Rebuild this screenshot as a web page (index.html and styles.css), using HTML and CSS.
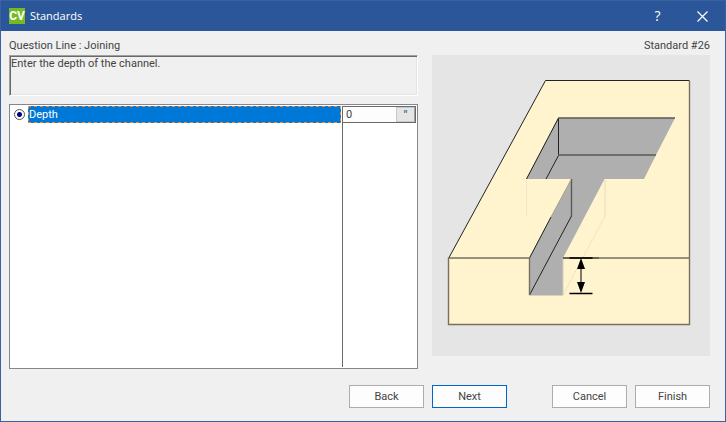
FILE: index.html
```html
<!DOCTYPE html>
<html lang="en">
<head>
<meta charset="utf-8">
<title>Standards</title>
<link rel="stylesheet" href="styles.css">
</head>
<body>
<div class="window">
  <header class="titlebar">
    <span class="logo" aria-hidden="true">CV</span>
    <h1 class="title">Standards</h1>
    <button class="caption-button" type="button">?</button>
    <button class="caption-button" type="button" aria-label="Close">
      <svg width="11" height="11" viewBox="0 0 11 11"><path d="M.5 .5 10.5 10.5M10.5 .5 .5 10.5" fill="none" stroke="#fff" stroke-width="1.2"/></svg>
    </button>
  </header>
  <main class="content">
    <section class="column">
      <h2 class="caption">Question Line : Joining</h2>
      <p class="prompt">Enter the depth of the channel.</p>
      <div class="list">
        <div class="names">
          <label class="option"><input class="radio" type="radio" name="question" checked><span class="option-name">Depth</span></label>
        </div>
        <div class="values">
          <div class="value">
            <input class="value-input" type="text" value="0" aria-label="Depth value">
            <button class="unit" type="button">"</button>
          </div>
        </div>
      </div>
    </section>
    <section class="column">
      <h2 class="caption caption-end">Standard #26</h2>
      <figure class="picture">
        <svg class="drawing" viewBox="432 55 278 301" role="img" aria-label="Channel depth">
          <path d="M448.500 258.500 545.500 80.500H689.500V324.500H448.500Z" fill="#fff4ce"/>
          <path d="M558 118H675L656 155 644 179H604.500L563 258V295.500H529V258L571 179H526Z" fill="#afafaf"/>
          <g fill="none" stroke="#222" stroke-width="1">
            <path d="M448.500 258.500 545.500 80.500H689.500"/>
            <path d="M526.500 179 558.500 118"/>
            <path d="M558.500 118V155.500L546 179M571.500 216 529.500 295M529.500 258 551 217"/>
          </g>
          <g fill="none" stroke="#77705f" stroke-width="1.400">
            <path d="M689.500 81V324.500H448.500V258H529.500V295M563 258H689.500"/>
            <path d="M558 118H675M558 155H656M571.500 216V179" stroke="#5a5955"/>
            <path d="M551 217 571 180" stroke="#aaa590" stroke-width="1"/>
          </g>
          <g fill="none" stroke="#f0e6c3">
            <path d="M526.500 180V216"/>
            <path d="M605 180V216" stroke="#e5dcba"/>
            <path d="M605 216 563 295" stroke-dasharray="1 1.500" stroke="#d8cfac"/>
            <path d="M563 259V295" stroke="#d2cdbd"/>
          </g>
          <g fill="none" stroke="#000">
            <path d="M563 258H599" stroke="#39362d"/>
            <path d="M569.500 258H592.500M569.500 293.500H592.500" stroke-width="1.600"/>
            <path d="M581 262V290"/>
          </g>
          <path d="M581 258 585 269H577ZM581 293 585 282H577Z"/>
        </svg>
      </figure>
    </section>
  </main>
  <footer class="actions">
    <div class="group">
      <button class="button" type="button">Back</button>
      <button class="button button-default" type="button">Next</button>
    </div>
    <div class="group">
      <button class="button" type="button">Cancel</button>
      <button class="button" type="button">Finish</button>
    </div>
  </footer>
</div>
</body>
</html>
```
FILE: styles.css
```css
* {
  box-sizing: border-box;
}

body {
  margin: 0;
  color: #444;
  font: 11px/16px Roboto, "Liberation Sans", sans-serif;
}

button,
input {
  margin: 0;
  padding: 0;
  border: 0;
  color: inherit;
  font: inherit;
}

h1,
h2,
p,
figure {
  margin: 0;
  font-size: inherit;
  font-weight: normal;
}

.window {
  display: flex;
  flex-direction: column;
  min-height: 100vh;
  border: 1px solid #3a62a1;
  background: #f0f0f0;
}

.titlebar {
  display: flex;
  align-items: center;
  height: 30px;
  padding-left: 8px;
  background: #2b579a;
  color: #fff;
}

.logo {
  width: 16px;
  height: 16px;
  background: #74bb20;
  font: bold 12px/16px Roboto, sans-serif;
  text-align: center;
}

.title {
  flex: 1;
  padding-left: 5px;
  font: 11px/16px "Open Sans", sans-serif;
}

.caption-button {
  display: flex;
  align-items: center;
  justify-content: center;
  width: 45px;
  height: 30px;
  background: transparent;
  font: 14px/16px "Open Sans", sans-serif;
}

.content {
  display: grid;
  flex: 1;
  grid-template-columns: minmax(0, 409fr) minmax(0, 278fr);
  gap: 14px;
  padding: 7px 15px 0 8px;
}

.column {
  display: flex;
  flex-direction: column;
}

.caption {
  padding-bottom: 1px;
}

.caption-end {
  text-align: right;
}

.prompt {
  min-height: 41px;
  padding: 0 1px;
  border: 1px solid;
  border-color: #a0a0a0 #fff #fff #a0a0a0;
  box-shadow: inset 1px 1px #696969, inset -1px -1px #e3e3e3;
}

.list {
  display: flex;
  flex: 1;
  margin-top: 8px;
  padding: 1px;
  border: 1px solid #828790;
  background: #fff;
}

.names {
  flex: 1;
  padding-right: 1px;
}

.option {
  display: flex;
  align-items: center;
  height: 17px;
}

.radio {
  appearance: none;
  width: 11px;
  height: 11px;
  margin: 0 3px;
  border: 1px solid #555;
  border-radius: 50%;
  background: radial-gradient(circle, #000080 0 2px, #fff 3px);
}

.option-name {
  --dash-x: repeating-linear-gradient(90deg, #ff8728 0 3px, #0078d7 3px 6px);
  --dash-y: repeating-linear-gradient(#ff8728 0 3px, #0078d7 3px 6px);
  flex: 1;
  height: 17px;
  padding-left: 1px;
  background:
    var(--dash-x) top / 100% 1px no-repeat,
    var(--dash-x) bottom / 100% 1px no-repeat,
    var(--dash-y) left / 1px 100% no-repeat,
    var(--dash-y) right / 1px 100% no-repeat,
    #0078d7;
  color: #fff;
  line-height: 18px;
}

.values {
  width: 74px;
  border-left: 1px solid #696969;
}

.value {
  display: flex;
  height: 17px;
  border: 1px solid #696969;
  border-left: 0;
}

.value-input {
  flex: 1;
  min-width: 0;
  padding-left: 3px;
  background: #fdfdfd;
}

.unit {
  width: 19px;
  border: 1px solid #c8c8c8;
  border-right-color: #a0a0a0;
  background: #e5e5e5;
  color: #2878a8;
  font-weight: bold;
  line-height: 12px;
}

.picture {
  flex: 1;
  background: #e5e5e5;
  margin-bottom: 13px;
}

.drawing {
  display: block;
  width: 100%;
}

.actions {
  display: flex;
  flex-wrap: wrap;
  justify-content: flex-end;
  gap: 8px 45px;
  padding: 16px 15px 13px;
}

.group {
  display: flex;
  gap: 8px;
}

.button {
  width: 75px;
  height: 23px;
  border: 1px solid #adadad;
  background: #fdfdfd;
}

.button-default {
  border-color: #0066cc;
}
```
